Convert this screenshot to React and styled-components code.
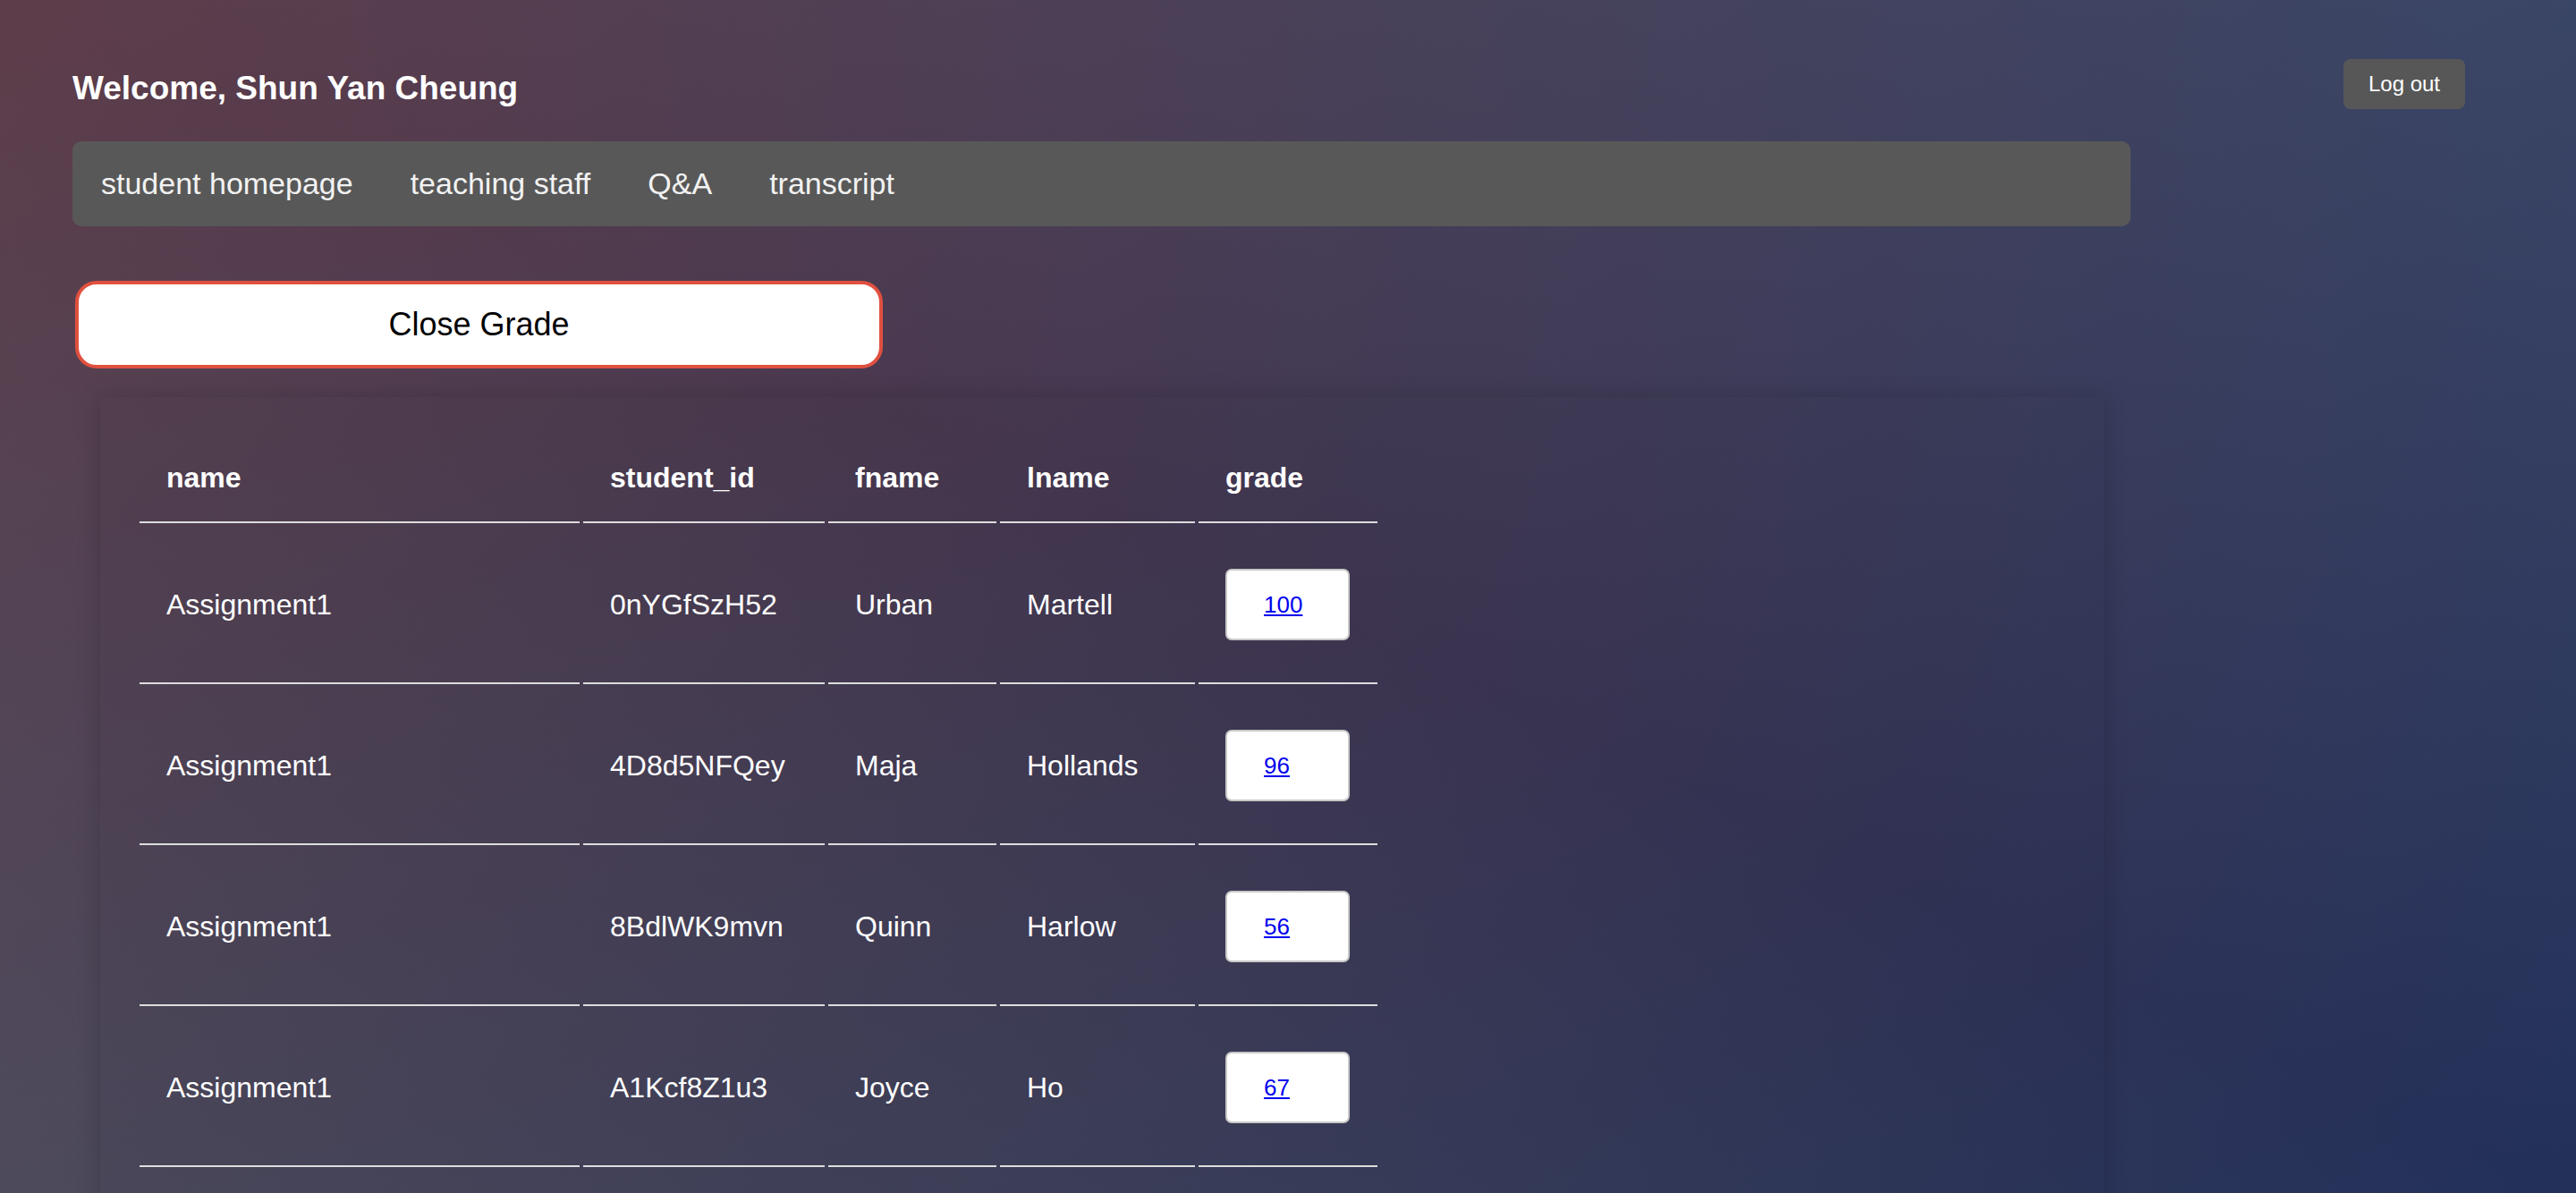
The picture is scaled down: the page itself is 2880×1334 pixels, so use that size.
import styled, { createGlobalStyle } from 'styled-components';

const GlobalStyle = createGlobalStyle`
  html, body {
    margin: 0;
    min-height: 100%;
  }
  body {
    font-family: 'Liberation Sans', Arial, sans-serif;
    min-height: 100vh;
    background:
      linear-gradient(to top right, rgba(118, 134, 122, 0.25) 0%, rgba(118, 134, 122, 0) 50%, rgba(44, 104, 149, 0) 50%, rgba(44, 104, 149, 0.3) 100%),
      linear-gradient(to bottom right, #5e3d4a 0%, #22305a 100%);
    background-attachment: fixed;
  }
`;

// 성적 데이터
const rows = [
  { name: 'Assignment1', id: '0nYGfSzH52', fname: 'Urban', lname: 'Martell', grade: 100 },
  { name: 'Assignment1', id: '4D8d5NFQey', fname: 'Maja', lname: 'Hollands', grade: 96 },
  { name: 'Assignment1', id: '8BdlWK9mvn', fname: 'Quinn', lname: 'Harlow', grade: 56 },
  { name: 'Assignment1', id: 'A1Kcf8Z1u3', fname: 'Joyce', lname: 'Ho', grade: 67 },
];

const columns = [
  { key: 'name', width: 432 },
  { key: 'student_id', width: 210 },
  { key: 'fname', width: 128 },
  { key: 'lname', width: 158 },
  { key: 'grade', width: 140 },
];

export default function App() {
  return (
    <>
      <GlobalStyle />
      <Page>
        <Header>
          <Welcome>Welcome, Shun Yan Cheung</Welcome>
          <LogoutButton>Log out</LogoutButton>
        </Header>
        <NavBar>
          <NavLink>student homepage</NavLink>
          <NavLink>teaching staff</NavLink>
          <NavLink>Q&amp;A</NavLink>
          <NavLink>transcript</NavLink>
        </NavBar>
        <CloseButton>Close Grade</CloseButton>
        <Card>
          <GradeTable>
            <thead>
              <tr>
                {columns.map((c) => (
                  <HeadCell key={c.key} $width={c.width}>
                    {c.key}
                  </HeadCell>
                ))}
              </tr>
            </thead>
            <tbody>
              {rows.map((r) => (
                <tr key={r.id}>
                  <Cell>{r.name}</Cell>
                  <Cell>{r.id}</Cell>
                  <Cell>{r.fname}</Cell>
                  <Cell>{r.lname}</Cell>
                  <Cell>
                    <GradeBox>
                      <GradeLink href='#'>{r.grade}</GradeLink>
                    </GradeBox>
                  </Cell>
                </tr>
              ))}
            </tbody>
          </GradeTable>
        </Card>
      </Page>
    </>
  );
}

const Page = styled.div`
  padding-left: 81px;
  padding-bottom: 60px;
`;

const Header = styled.header`
  display: flex;
  justify-content: space-between;
  align-items: flex-start;
  padding-top: 66px;
  padding-right: 124px;
`;

const Welcome = styled.h3`
  margin: 12px 0 0;
  font-size: 37px;
  font-weight: 700;
  color: #ffffff;
`;

const LogoutButton = styled.button`
  width: 136px;
  height: 56px;
  border: none;
  border-radius: 8px;
  background: #575757;
  color: #ffffff;
  font-family: 'Liberation Sans', Arial, sans-serif;
  font-size: 24px;
  cursor: pointer;
`;

const NavBar = styled.nav`
  display: flex;
  align-items: center;
  margin-top: 36px;
  width: 2301px;
  height: 95px;
  border-radius: 10px;
  background: #585858;
`;

const NavLink = styled.a`
  padding: 0 32px;
  font-size: 34px;
  color: #f2f2f2;
  cursor: pointer;
`;

const CloseButton = styled.button`
  display: block;
  margin: 61px 0 0 3px;
  width: 903px;
  height: 98px;
  border: 4px solid #e0503f;
  border-radius: 24px;
  background: #ffffff;
  color: #000000;
  font-family: 'Liberation Sans', Arial, sans-serif;
  font-size: 36px;
  cursor: pointer;
`;

const Card = styled.section`
  margin: 32px 0 0 31px;
  width: 2240px;
  box-sizing: border-box;
  padding: 38px 40px 40px;
  background: rgba(0, 0, 0, 0.03);
  box-shadow: 0 0 24px rgba(0, 0, 0, 0.18);
`;

const GradeTable = styled.table`
  border-spacing: 4px;
  color: #ffffff;
  font-size: 32px;
`;

const HeadCell = styled.th`
  width: ${(p) => p.$width}px;
  padding: 30px;
  text-align: left;
  font-weight: 700;
  border-bottom: 2px solid #dddddd;
`;

const Cell = styled.td`
  padding: 30px;
  border-bottom: 2px solid #dddddd;
`;

const GradeBox = styled.div`
  display: flex;
  align-items: center;
  box-sizing: border-box;
  margin: 17px 0;
  width: 139px;
  height: 80px;
  padding-left: 41px;
  border: 2px solid #c8c8c8;
  border-radius: 7px;
  background: #ffffff;
`;

const GradeLink = styled.a`
  font-size: 26px;
  color: #0000ee;
  text-decoration: underline;
`;
